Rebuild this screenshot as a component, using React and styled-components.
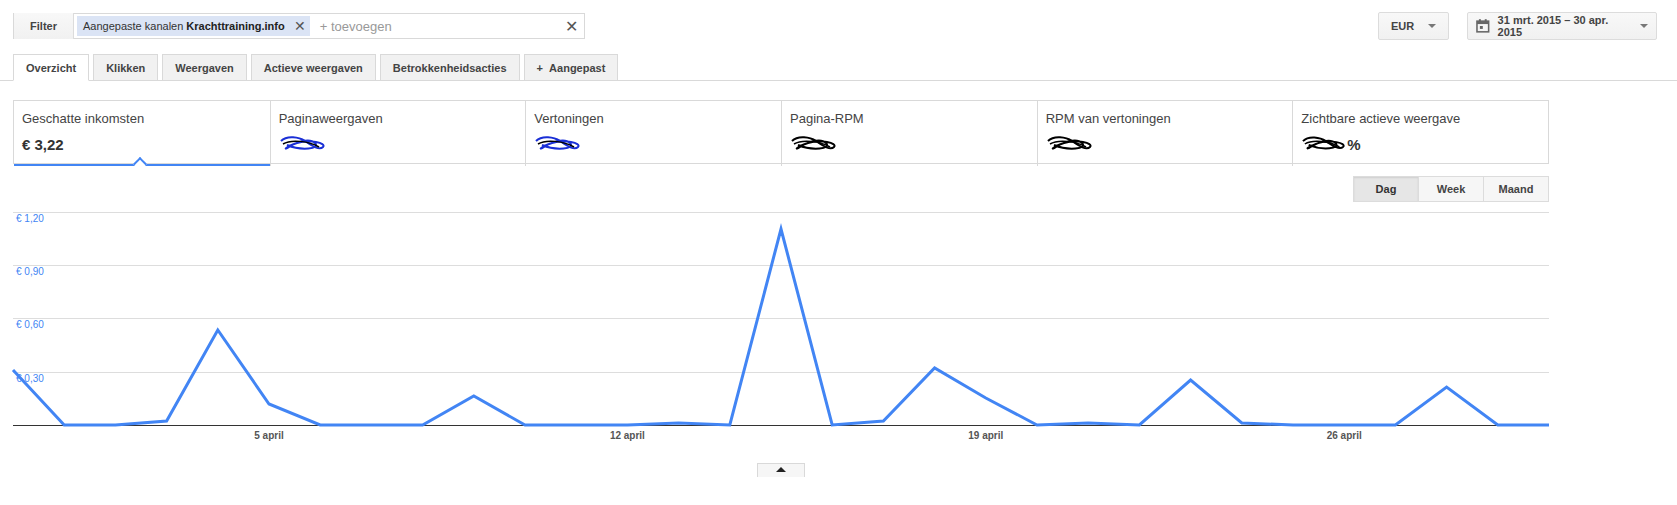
import React from 'react';
import styled, { createGlobalStyle } from 'styled-components';

const Global = createGlobalStyle`
  body { margin: 0; background: #fff; font-family: Arial, "Liberation Sans", sans-serif; color: #333; }
`;

const Page = styled.div`
  width: 1677px;
  height: 505px;
  position: relative;
  overflow: hidden;
`;

const TopBar = styled.div`
  display: flex;
  align-items: center;
  padding: 12px 20px 0 13px;
  height: 28px;
`;

const FilterBox = styled.div`
  display: flex;
  align-items: center;
  width: 572px;
  height: 26px;
  border: 1px solid #d9d9d9;
  box-sizing: border-box;
  background: #fff;
`;

const GreyButton = styled.div`
  display: flex;
  align-items: center;
  justify-content: center;
  gap: ${p => p.$gap || 0}px;
  height: ${p => p.$h || 26}px;
  padding: 0 ${p => p.$pad || 12}px;
  width: ${p => (p.$w ? p.$w + 'px' : 'auto')};
  box-sizing: border-box;
  background: linear-gradient(#f8f8f8, #f1f1f1);
  border: 1px solid #dcdcdc;
  border-radius: 2px;
  font-size: 11px;
  font-weight: bold;
  color: #444;
`;

const FilterLabel = styled(GreyButton)`
  border: 0;
  border-right: 1px solid #dcdcdc;
  border-radius: 0;
`;

const Chip = styled.div`
  display: flex;
  align-items: center;
  height: 20px;
  margin-left: 3px;
  padding: 0 4px 0 6px;
  background: #dbe4f5;
  font-size: 11px;
  color: #333;
  b { margin-left: 3px; font-size: 11px; color: #222; }
  span { margin-left: 9px; font-size: 14px; color: #555; }
`;

const AddText = styled.div`
  flex: 1;
  margin-left: 10px;
  font-size: 13px;
  color: #999;
`;

const Close = styled.div`
  margin-right: 6px;
  font-size: 16px;
  color: #555;
`;

const Spacer = styled.div` flex: 1; `;
const Gap = styled.div` width: 18px; `;

const Caret = styled.span`
  width: 0; height: 0;
  border-left: 4px solid transparent;
  border-right: 4px solid transparent;
  border-top: 4px solid #777;
`;

const Tabs = styled.div`
  display: flex;
  gap: 4px;
  margin-top: 14px;
  padding-left: 13px;
  border-bottom: 1px solid #d9d9d9;
  height: 26px;
  align-items: flex-end;
`;

const Tab = styled.div`
  height: ${p => (p.$active ? 27 : 26)}px;
  box-sizing: border-box;
  padding: 0 12px;
  display: flex;
  align-items: center;
  font-size: 11px;
  font-weight: bold;
  color: #444;
  border: 1px solid #d9d9d9;
  border-bottom: ${p => (p.$active ? '1px solid #fff' : '0')};
  background: ${p => (p.$active ? '#fff' : '#f1f1f1')};
  margin-bottom: ${p => (p.$active ? -1 : 0)}px;
`;

const Cards = styled.div`
  display: grid;
  grid-template-columns: repeat(6, 1fr);
  width: 1536px;
  margin: 19px 0 0 13px;
  height: 64px;
  border: 1px solid #d9d9d9;
  box-sizing: border-box;
`;

const Card = styled.div`
  position: relative;
  padding: 10px 8px;
  border-left: ${p => (p.$first ? 0 : '1px solid #d9d9d9')};
  border-bottom: ${p => (p.$active ? '2px solid #4285f4' : 0)};
  font-size: 13px;
  color: #444;
`;

const Value = styled.div`
  margin-top: 8px;
  font-size: 15px;
  font-weight: bold;
  color: #333;
  height: 20px;
  display: flex;
  align-items: center;
`;

const Notch = styled.div`
  position: absolute;
  left: 121px;
  bottom: 0;
  width: 8px;
  height: 8px;
  background: #fff;
  border-left: 2px solid #4285f4;
  border-top: 2px solid #4285f4;
  transform: translateY(50%) rotate(45deg);
`;

const Toggle = styled.div`
  display: flex;
  justify-content: flex-end;
  width: 1549px;
  margin-top: 12px;
`;

const ToggleBtn = styled(GreyButton)`
  width: 66px;
  border-radius: 0;
  margin-left: -1px;
  background: ${p => (p.$active ? '#e6e6e6' : '#f6f6f6')};
  box-shadow: ${p => (p.$active ? 'inset 0 1px 2px rgba(0,0,0,.1)' : 'none')};
  color: ${p => (p.$active ? '#333' : '#444')};
`;

const ChartWrap = styled.svg`
  display: block;
  margin-top: 10px;
`;

const Collapse = styled.div`
  position: absolute;
  left: 757px;
  top: 463px;
  width: 48px;
  height: 14px;
  border: 1px solid #d9d9d9;
  border-bottom: 0;
  background: #f6f6f6;
  display: flex;
  justify-content: center;
  padding-top: 3px;
  box-sizing: border-box;
  &::after {
    content: '';
    border-left: 5px solid transparent;
    border-right: 5px solid transparent;
    border-bottom: 5px solid #222;
    height: 0;
  }
`;

const Scribble = ({ color = '#000', w = 48 }) => (
  <svg width={w} height="18" viewBox="0 0 48 18">
    <path d="M2 6 C8 0 20 2 26 6 S40 16 44 12 S30 4 18 8 S4 16 10 12 S30 2 36 8 S22 16 8 10"
      fill="none" stroke={color} strokeWidth="2" />
    <path d="M4 9 C12 4 30 6 40 12" fill="none" stroke="#000" strokeWidth="1.5" />
  </svg>
);

const data = [370, 425, 425, 421, 330, 404, 425, 425, 425, 396, 425, 425, 425, 423, 425, 229,
  425, 421, 368, 398, 425, 423, 425, 380, 423, 425, 425, 425, 387, 425, 425];

const Chart = () => {
  const top = 212;
  const x = i => 13 + (i * 1536) / 30;
  const pts = data.map((y, i) => `${x(i)},${y - top}`).join(' ');
  const grid = [212, 265, 318, 372, 425];
  const labels = ['€ 1,20', '€ 0,90', '€ 0,60', '€ 0,30'];
  const xl = [[5, '5 april'], [12, '12 april'], [19, '19 april'], [26, '26 april']];
  return (
    <ChartWrap width="1677" height="240">
      {grid.map((g, i) => (
        <line key={g} x1="13" x2="1549" y1={g - top + 0.5} y2={g - top + 0.5}
          stroke={i === 4 ? '#333' : '#ddd'} />
      ))}
      {labels.map((l, i) => (
        <text key={l} x="16" y={grid[i] - top + 10} fontSize="10" fill="#4285f4"
          fontFamily="Arial, Liberation Sans, sans-serif">{l}</text>
      ))}
      {xl.map(([i, l]) => (
        <text key={l} x={x(i)} y="227" fontSize="10" fontWeight="bold" fill="#555" textAnchor="middle"
          fontFamily="Arial, Liberation Sans, sans-serif">{l}</text>
      ))}
      <polyline points={pts} fill="none" stroke="#4285f4" strokeWidth="3" strokeLinejoin="miter" />
    </ChartWrap>
  );
};

const cards = [
  ['Geschatte inkomsten', '€ 3,22'],
  ['Paginaweergaven', 'blue'],
  ['Vertoningen', 'blue'],
  ['Pagina-RPM', 'black'],
  ['RPM van vertoningen', 'black'],
  ['Zichtbare actieve weergave', 'pct'],
];

export default function App() {
  return (
    <Page>
      <Global />
      <TopBar>
        <FilterBox>
          <FilterLabel $w={60} $h={26}>Filter</FilterLabel>
          <Chip>Aangepaste kanalen <b>Krachttraining.info</b><span>✕</span></Chip>
          <AddText>+ toevoegen</AddText>
          <Close>✕</Close>
        </FilterBox>
        <Spacer />
        <GreyButton $w={71} $gap={14} $h={28}>EUR <Caret /></GreyButton>
        <Gap />
        <GreyButton $w={190} $gap={8} $h={28} $pad={8}>
          <svg width="14" height="14" viewBox="0 0 14 14">
            <rect x="1" y="2" width="12" height="11" fill="none" stroke="#666" strokeWidth="1.6" />
            <rect x="1" y="2" width="12" height="3" fill="#666" />
            <rect x="3" y="0" width="2" height="3" fill="#666" />
            <rect x="9" y="0" width="2" height="3" fill="#666" />
            <rect x="4" y="7" width="3" height="3" fill="#666" />
          </svg>
          31 mrt. 2015 – 30 apr. 2015 <Caret />
        </GreyButton>
      </TopBar>
      <Tabs>
        <Tab $active>Overzicht</Tab>
        <Tab>Klikken</Tab>
        <Tab>Weergaven</Tab>
        <Tab>Actieve weergaven</Tab>
        <Tab>Betrokkenheidsacties</Tab>
        <Tab>+&nbsp;&nbsp;Aangepast</Tab>
      </Tabs>
      <Cards>
        {cards.map(([t, v], i) => (
          <Card key={t} $first={i === 0} $active={i === 0}>
            {t}
            <Value>
              {i === 0 ? v : v === 'pct'
                ? <><Scribble w={46} />%</>
                : <Scribble color={v === 'blue' ? '#1a2fd6' : '#000'} />}
            </Value>
            {i === 0 && <Notch />}
          </Card>
        ))}
      </Cards>
      <Toggle>
        <ToggleBtn $active $h={26}>Dag</ToggleBtn>
        <ToggleBtn $h={26}>Week</ToggleBtn>
        <ToggleBtn $h={26}>Maand</ToggleBtn>
      </Toggle>
      <Chart />
      <Collapse />
    </Page>
  );
}
